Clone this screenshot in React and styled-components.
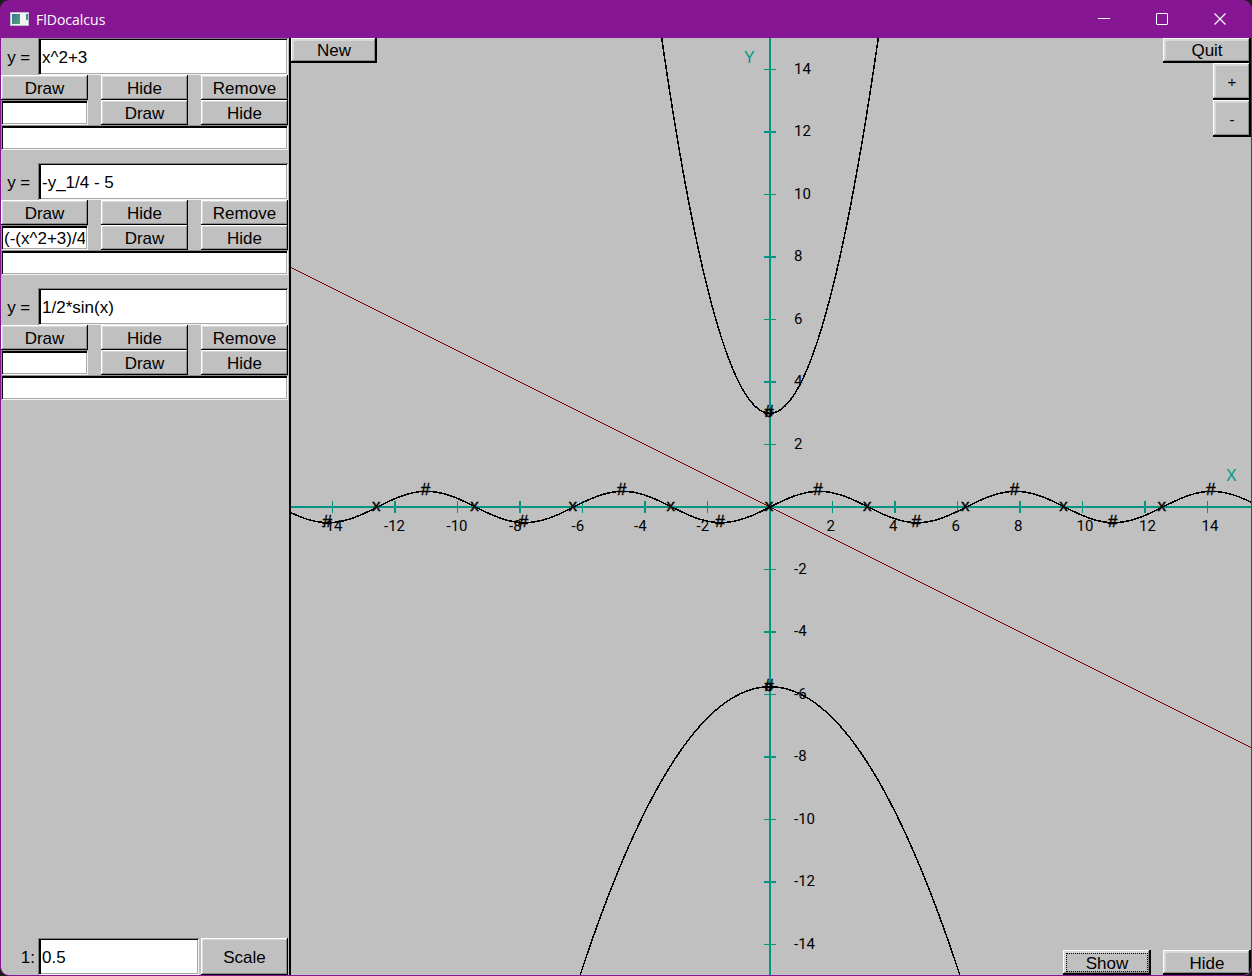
import React from "react";
import styled, { createGlobalStyle, css } from "styled-components";

const purple = "#871694";
const face = "#c0c0c0";
const teal = "#009682";

const GlobalStyle = createGlobalStyle`
  * { box-sizing: border-box; }
  html, body { margin: 0; background: #1c1c1c; }
  button, input { margin: 0; border: 0; border-radius: 0; font: inherit; color: inherit; }
`;

const Window = styled.div`
  min-height: 100vh;
  display: flex;
  flex-direction: column;
  overflow: hidden;
  border-radius: 9px;
  background: ${purple};
  color: #000;
  font-family: "Liberation Sans", Arial, sans-serif;
  font-size: 17px;
`;

const TitleBar = styled.header`
  height: 38px;
  flex: none;
  display: flex;
  align-items: center;
  padding: 0 3px 0 10px;
  gap: 7px;
  color: #fff;
`;

const Title = styled.h1`
  flex: 1;
  margin: 0;
  padding-top: 1px;
  font: 400 14px/20px "Open Sans", "Noto Sans", sans-serif;
`;

const CaptionButtons = styled.div`
  display: flex;
`;

const CaptionButton = styled.button`
  width: 58px;
  height: 38px;
  padding: 0;
  display: grid;
  place-items: center;
  background: transparent;
`;

const Main = styled.main`
  flex: 1;
  display: flex;
  margin: 0 1px 1px;
  border-radius: 0 0 8px 8px;
  overflow: hidden;
  background: ${face};
`;

const Sidebar = styled.aside`
  width: 290px;
  flex: none;
  display: flex;
  flex-direction: column;
  justify-content: space-between;
  padding-right: 1px;
  border-right: 2px solid #000;
`;

const FunctionList = styled.div`
  display: flex;
  flex-direction: column;
  gap: 13px;
`;

const FunctionCard = styled.section`
  display: flex;
  flex-direction: column;
`;

const Field = styled.div`
  display: flex;
  align-items: center;
  height: 37px;
`;

const FieldLabel = styled.label`
  width: 37px;
  flex: none;
  padding: 2px 3px 0 0;
  text-align: right;
  white-space: pre;
`;

const ControlRow = styled.div`
  display: grid;
  grid-template-columns: repeat(3, 87px);
  column-gap: 13px;
`;

const TextInput = styled.input`
  flex: 1;
  min-width: 0;
  width: 100%;
  height: 37px;
  padding: 2px 3px 0 4px;
  background: #fff;
  outline: none;
  box-shadow: inset 1px 1px #808080, inset -1px -1px #f4f4f4,
    inset 3px 2px #000, inset -2px -2px #a8a8a8;
`;

const SlimInput = styled(TextInput)`
  flex: none;
  height: 25px;
  padding-left: 3px;
  box-shadow: inset 1px 1px #909090, inset -1px -1px #f4f4f4,
    inset 2px 3px #000, inset -2px -2px #a8a8a8;
`;

const Button = styled.button`
  width: ${(p) => p.$width || 87}px;
  height: ${(p) => p.$height || 25}px;
  padding: ${(p) => (p.$raised ? 0 : 2)}px 0 0;
  flex: none;
  background: ${face};
  font-size: ${(p) => (p.$small ? 15 : 17)}px;
  line-height: 20px;
  text-align: center;
  outline: none;
  ${(p) =>
    p.$heavy
      ? css`box-shadow: inset -2px -2px #000, inset 1px 1px #fff,
          inset -3px -3px #8c8c8c, inset 3px 3px #d8d8d8;`
      : css`box-shadow: inset -1px -1px #000, inset 1px 1px #fff,
          inset -2px -2px #8c8c8c, inset 2px 2px #d8d8d8;`}
`;

const FocusedButton = styled(Button)`
  outline: 1px dotted #000;
  outline-offset: -4px;
`;

const ScaleField = styled(Field)`
  & > button { margin-left: 2px; }
`;

const PlotArea = styled.section`
  position: relative;
  flex: 1;
  min-width: 0;
  display: flex;
  flex-direction: column;
  justify-content: space-between;
`;

const Graph = styled.svg`
  position: absolute;
  inset: 0;
  width: 100%;
  height: 100%;
  font-family: Roboto, sans-serif;
  font-size: 15px;
`;

const Toolbar = styled.div`
  position: relative;
  display: flex;
  justify-content: ${(p) => (p.$end ? "flex-end" : "space-between")};
  align-items: flex-start;
  gap: 12px;
`;

const ZoomColumn = styled.div`
  display: flex;
  flex-direction: column;
  align-items: flex-end;
`;

const UNIT = 31.25;
const OX = 479;
const OY = 469;
const px = (x) => OX + x * UNIT;
const py = (y) => OY - y * UNIT;

function curve(fn, from, to, step) {
  const points = [];
  for (let x = from; x <= to; x += step) {
    points.push(`${px(x).toFixed(1)},${py(fn(x)).toFixed(1)}`);
  }
  return points.join(" ");
}

const curves = [
  curve((x) => x * x + 3, -3.6, 3.6, 0.08),
  curve((x) => -(x * x + 3) / 4 - 5, -6.4, 6.4, 0.16),
  curve((x) => Math.sin(x) / 2, -15.4, 15.5, 0.16),
];

const ticks = [-14, -12, -10, -8, -6, -4, -2, 2, 4, 6, 8, 10, 12, 14];
const roots = [-4, -3, -2, -1, 0, 1, 2, 3, 4].map((k) => k * Math.PI);
const extrema = [-5, -4, -3, -2, -1, 0, 1, 2, 3, 4].map((k) => (k + 0.5) * Math.PI);

function Plot() {
  return (
    <Graph viewBox="0 0 960 937" preserveAspectRatio="xMidYMid slice" role="img" aria-label="Graph">
      <g stroke={teal} strokeWidth="2" shapeRendering="crispEdges">
        <line x1="-960" x2="1920" y1={OY} y2={OY} />
        <line x1={OX} x2={OX} y1="-937" y2="1874" />
        {ticks.map((t) => (
          <g key={t} strokeWidth={t % 4 === 0 ? 2 : 1}>
            <line x1={px(t)} x2={px(t)} y1={OY - 6} y2={OY + 6} />
            <line x1={OX - 6} x2={OX + 6} y1={py(t)} y2={py(t)} />
          </g>
        ))}
      </g>
      <g fill="none" shapeRendering="crispEdges" strokeWidth="1.5">
        <line x1={px(-16)} y1={py(8)} x2={px(16)} y2={py(-8)} stroke="#800000" strokeWidth="1.2" />
        {curves.map((points) => (
          <polyline key={points} points={points} stroke="#000" />
        ))}
      </g>
      {ticks.map((t) => (
        <g key={t}>
          <text x={px(t) - (t < 0 ? 11 : 6)} y={OY + 24}>{t}</text>
          <text x={OX + 24} y={py(t) + 4}>{t}</text>
        </g>
      ))}
      <g
        textAnchor="middle"
        fontFamily="Liberation Sans, sans-serif"
        fontSize="17"
        stroke="#000"
        strokeWidth="0.4"
      >
        {roots.map((x) => (
          <text key={x} x={px(x) - 1} y={OY + 4}>x</text>
        ))}
        {extrema.map((x) => (
          <text key={x} x={px(x) - 1} y={py(Math.sin(x) / 2) + 4}>#</text>
        ))}
        {[3, -5.75].map((y) => (
          <g key={y}>
            <text x={OX - 1} y={py(y) + 4}>#</text>
            <text x={OX - 1} y={py(y) + 4} fontSize="15">o</text>
          </g>
        ))}
      </g>
      <g fill={teal} fontFamily="Liberation Sans, sans-serif" fontSize="16">
        <text x="935" y="443">X</text>
        <text x="453" y="25">Y</text>
      </g>
    </Graph>
  );
}

function FunctionPanel({ id, formula, derived }) {
  return (
    <FunctionCard>
      <Field>
        <FieldLabel htmlFor={id}>{"y = "}</FieldLabel>
        <TextInput id={id} defaultValue={formula} />
      </Field>
      <ControlRow>
        <Button>Draw</Button>
        <Button>Hide</Button>
        <Button>Remove</Button>
      </ControlRow>
      <ControlRow>
        <SlimInput aria-label="Derivative" defaultValue={derived} />
        <Button>Draw</Button>
        <Button>Hide</Button>
      </ControlRow>
      <SlimInput aria-label="Message" />
    </FunctionCard>
  );
}

export default function App() {
  return (
    <>
      <GlobalStyle />
      <Window>
        <TitleBar>
          <svg width="19" height="16" viewBox="0 0 19 16" aria-hidden="true">
            <defs>
              <linearGradient id="pane" x1="0" y1="0" x2="1" y2="1">
                <stop offset="0" stopColor="#3f72a4" />
                <stop offset="1" stopColor="#4fa86b" />
              </linearGradient>
            </defs>
            <rect x="0" y="1" width="19" height="14" fill="#b9bfc4" />
            <rect x="1" y="2" width="17" height="12" fill="#f1f3f4" />
            <rect x="2" y="3" width="8" height="10" fill="url(#pane)" />
            <rect x="16" y="3" width="2" height="6" fill="url(#pane)" />
          </svg>
          <Title>FlDocalcus</Title>
          <CaptionButtons>
            <CaptionButton aria-label="Minimize">
              <svg width="12" height="12" viewBox="0 0 12 12"><path d="M0 5.5H12" stroke="#fff" /></svg>
            </CaptionButton>
            <CaptionButton aria-label="Maximize">
              <svg width="12" height="12" viewBox="0 0 12 12"><rect x=".5" y=".5" width="11" height="11" rx=".5" fill="none" stroke="#fff" /></svg>
            </CaptionButton>
            <CaptionButton aria-label="Close">
              <svg width="12" height="12" viewBox="0 0 12 12"><path d="M.5 .5l11 11M11.5 .5l-11 11" stroke="#fff" strokeWidth="1.2" /></svg>
            </CaptionButton>
          </CaptionButtons>
        </TitleBar>
        <Main>
          <Sidebar>
            <FunctionList>
              <FunctionPanel id="f1" formula="x^2+3" />
              <FunctionPanel id="f2" formula="-y_1/4 - 5" derived="(-(x^2+3)/4-5)" />
              <FunctionPanel id="f3" formula="1/2*sin(x)" />
            </FunctionList>
            <ScaleField>
              <FieldLabel htmlFor="scale">1:</FieldLabel>
              <TextInput id="scale" defaultValue="0.5" />
              <Button $height={37}>Scale</Button>
            </ScaleField>
          </Sidebar>
          <PlotArea>
            <Plot />
            <Toolbar>
              <Button $heavy $raised $width={86}>New</Button>
              <ZoomColumn>
                <Button $heavy $raised $width={88}>Quit</Button>
                <Button $small $heavy $raised $width={38} $height={37}>+</Button>
                <Button $small $heavy $width={38} $height={37}>-</Button>
              </ZoomColumn>
            </Toolbar>
            <Toolbar $end>
              <FocusedButton $heavy $width={88}>Show</FocusedButton>
              <Button $heavy $width={88}>Hide</Button>
            </Toolbar>
          </PlotArea>
        </Main>
      </Window>
    </>
  );
}
